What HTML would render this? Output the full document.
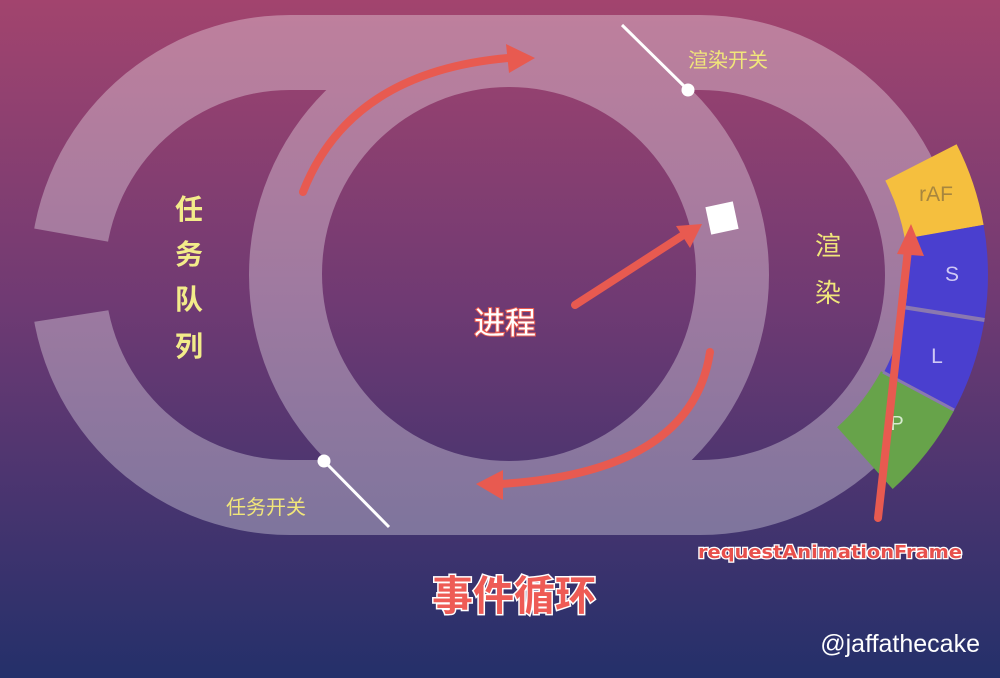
<!DOCTYPE html>
<html><head><meta charset="utf-8"><style>
html,body{margin:0;padding:0;width:1000px;height:678px;overflow:hidden}
svg{display:block}
</style></head><body>
<svg width="1000" height="678" viewBox="0 0 1000 678" xmlns="http://www.w3.org/2000/svg">
<defs>
<linearGradient id="bg" x1="0" y1="0" x2="0" y2="678" gradientUnits="userSpaceOnUse">
<stop offset="0" stop-color="#a2446e"/>
<stop offset="0.45" stop-color="#6f3a73"/>
<stop offset="0.75" stop-color="#46346f"/>
<stop offset="1" stop-color="#24306a"/>
</linearGradient>
<mask id="band" maskUnits="userSpaceOnUse" x="0" y="0" width="1000" height="678">
<rect x="0" y="0" width="1000" height="678" fill="black"/>
<rect x="30" y="15" width="930" height="520" rx="260" ry="260" fill="white"/>
<rect x="105" y="90" width="780" height="370" rx="185" ry="185" fill="black"/>
<polygon points="20,226 110,242 110,310 20,324" fill="black"/>
<circle cx="509" cy="275" r="260" fill="white"/>
<circle cx="509" cy="274" r="187" fill="black"/>
</mask>
</defs>
<rect width="1000" height="678" fill="url(#bg)"/>
<rect width="1000" height="678" fill="#fff" opacity="0.32" mask="url(#band)"/>

<!-- segments -->
<path d="M885.3,180.6 L956.6,144.3 A288,288 0 0 1 983.6,224.9 L904.9,238.8 A208,208 0 0 0 885.3,180.6Z" fill="#f5bf3e"/>
<path d="M904.9,238.8 L983.6,224.9 A288,288 0 0 1 954.3,410.1 L883.7,372.6 A208,208 0 0 0 904.9,238.8Z" fill="#4a3fcf"/>
<line x1="905.5" y1="307.5" x2="984.5" y2="320" stroke="#8a78b0" stroke-width="4"/>
<path d="M881,371.2 L954.3,410.1 A288,288 0 0 1 892.7,489 L837.1,427.3 A205,205 0 0 0 881,371.2Z" fill="#67a34a"/>
<line x1="883" y1="372" x2="954" y2="410" stroke="#8a78b0" stroke-width="3"/>
<text x="936" y="201" font-family="Liberation Sans, sans-serif" font-size="21" fill="#a7863e" text-anchor="middle">rAF</text>
<text x="952" y="281" font-family="Liberation Sans, sans-serif" font-size="21" fill="#cfc8f5" text-anchor="middle">S</text>
<text x="937" y="363" font-family="Liberation Sans, sans-serif" font-size="21" fill="#cfc8f5" text-anchor="middle">L</text>
<text x="897" y="430" font-family="Liberation Sans, sans-serif" font-size="20" fill="#d8ecd0" text-anchor="middle">P</text>

<!-- switches -->
<line x1="622" y1="25" x2="688" y2="90" stroke="#fff" stroke-width="3"/>
<circle cx="688" cy="90" r="6.5" fill="#fff"/>
<line x1="324" y1="461" x2="389" y2="527" stroke="#fff" stroke-width="3"/>
<circle cx="324" cy="461" r="6.5" fill="#fff"/>

<!-- square -->
<rect x="708" y="204" width="28" height="28" fill="#fff" transform="rotate(-12 722 218)"/>

<!-- arrows -->
<g stroke="#e85a50" stroke-width="8" fill="none" stroke-linecap="round">
<path d="M303,192 Q350,72 508,58"/>
<path d="M575,305 L688,232"/>
<path d="M710,352 Q692,472 500,484"/>
<path d="M878,518 L908,250"/>
</g>
<g fill="#e85a50">
<polygon points="535,58 506,44 509,73"/>
<polygon points="702,224 676,226 690,248"/>
<polygon points="476,484 503,470 503,500"/>
<polygon points="911,224 897,254 924,256"/>
</g>

<!-- text -->
<g font-family="Liberation Sans, 'Noto Sans CJK SC', sans-serif" fill="#f1e67a">
<text x="688" y="67" font-size="20">渲染开关</text>
<text x="226" y="514" font-size="20">任务开关</text>
<g font-size="28" font-weight="bold" text-anchor="middle" fill="#f3ec8a">
<text x="189" y="219">任</text>
<text x="189" y="264">务</text>
<text x="189" y="309">队</text>
<text x="189" y="356">列</text>
</g>
<g font-size="26" text-anchor="middle">
<text x="828" y="255">渲</text>
<text x="828" y="302">染</text>
</g>
</g>
<text x="505" y="334" font-family="Liberation Sans, 'Noto Sans CJK SC', sans-serif" font-size="31" fill="#fff" stroke="#e85a50" stroke-width="2" paint-order="stroke" text-anchor="middle">进程</text>
<text x="514" y="610" font-family="Liberation Sans, 'Noto Sans CJK SC', sans-serif" font-size="41" font-weight="bold" fill="#ee5b55" stroke="#fff" stroke-width="3" paint-order="stroke" text-anchor="middle">事件循环</text>
<text x="698" y="558" textLength="264" lengthAdjust="spacingAndGlyphs" font-family="DejaVu Sans, sans-serif" font-size="18" font-weight="bold" fill="#e8504c" stroke="#fff" stroke-width="2.5" paint-order="stroke">requestAnimationFrame</text>
<text x="980" y="652" font-family="Liberation Sans, sans-serif" font-size="25" fill="#fff" text-anchor="end">@jaffathecake</text>
</svg>
</body></html>
